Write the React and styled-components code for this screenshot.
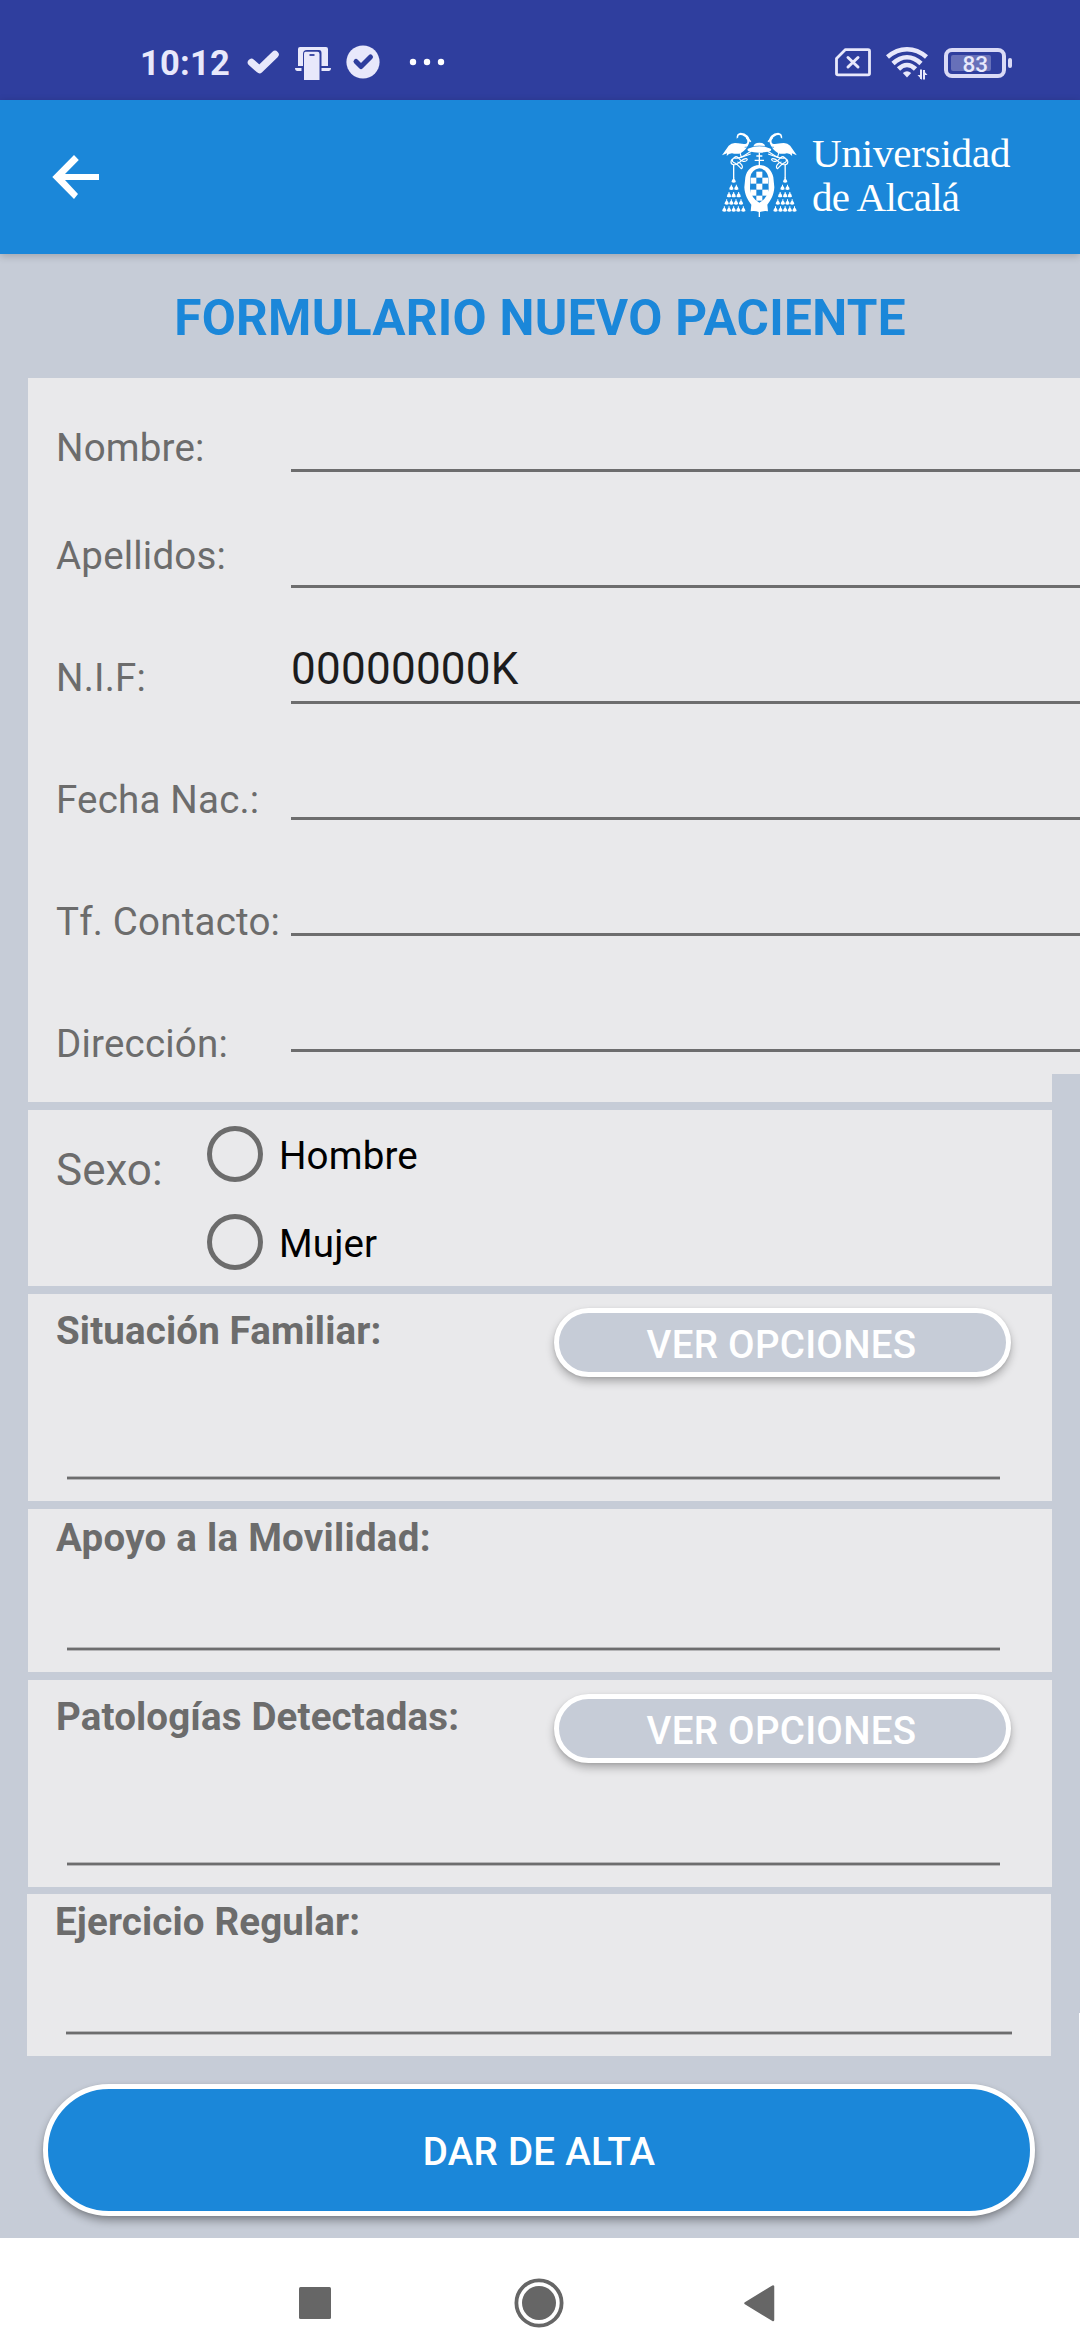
import React from "react";
import styled, { createGlobalStyle } from "styled-components";

const GlobalStyle = createGlobalStyle`
  *, *::before, *::after { box-sizing: border-box; }
  html, body { margin: 0; padding: 0; }
  body { font-family: Roboto, "Noto Sans", sans-serif; background: #ffffff; }
`;

const color = {
  primary: "#1b87d9",
  primaryDark: "#2f3e9e",
  surface: "#c6ccd7",
  card: "#e9e9eb",
  label: "#6c6c6c",
  line: "#6d6d6e",
  status: "#e8e8fb",
};

const Screen = styled.div`
  width: 1080px;
  height: 2340px;
  display: flex;
  flex-direction: column;
  overflow: hidden;
`;

const StatusBar = styled.header`
  height: 100px;
  flex: none;
  display: flex;
  align-items: flex-start;
  justify-content: space-between;
  padding: 45px 68px 0 140px;
  background: ${color.primaryDark};
  color: ${color.status};
`;

const StatusGroup = styled.div`
  height: 36px;
  display: flex;
  align-items: center;
`;

const Clock = styled.span`
  width: 90px;
  font-size: 34.5px;
  line-height: 36px;
  font-weight: 700;
  letter-spacing: 0.2px;
`;

const StatusIcon = styled.svg`
  display: block;
  flex: none;
  margin-left: ${(p) => p.$ml || 0}px;
`;

const Battery = styled.div`
  display: flex;
  align-items: center;
  gap: 2px;
  margin-left: 16px;
`;

const BatteryBody = styled.div`
  width: 62px;
  height: 30px;
  padding: 2.5px;
  border: 4.5px solid #dadaf6;
  border-radius: 8px;
`;

const BatteryLevel = styled.div`
  width: 40px;
  height: 16px;
  border-radius: 2px;
  background: #6770b9;
  font-size: 22.5px;
  line-height: 18px;
  font-weight: 500;
  text-indent: 12px;
  white-space: nowrap;
`;

const BatteryTip = styled.div`
  width: 4px;
  height: 10px;
  border-radius: 2px;
  background: #dadaf6;
`;

const AppBar = styled.div`
  height: 154px;
  flex: none;
  display: flex;
  justify-content: space-between;
  padding: 26px 66px 0 52px;
  background: ${color.primary};
  box-shadow: 0 2px 8px rgba(0, 0, 0, 0.2);
  z-index: 1;
`;

const BackButton = styled.button`
  width: 48px;
  height: 48px;
  margin-top: 27px;
  padding: 0;
  border: 0;
  background: none;
`;

const Brand = styled.div`
  display: flex;
  color: #fff;
`;

const BrandName = styled.div`
  width: 202px;
  margin-left: 6px;
  padding-top: 5px;
  font-family: "Liberation Serif", serif;
  font-size: 41px;
  line-height: 44px;
`;

const BrandLine = styled.div`
  letter-spacing: ${(p) => p.$spacing}px;
  white-space: nowrap;
`;

const Page = styled.main`
  position: relative;
  height: 1984px;
  flex: none;
  display: flex;
  flex-direction: column;
  padding: 0 28px;
  background: ${color.surface};
  overflow: hidden;
`;

const Title = styled.h1`
  height: 124px;
  flex: none;
  margin: 0;
  font-size: 49.5px;
  line-height: 128px;
  font-weight: 700;
  letter-spacing: 0.3px;
  text-align: center;
  color: ${color.primary};
`;

const Card = styled.section`
  height: ${(p) => p.$height}px;
  flex: none;
  margin: 0 0 8px;
  background: ${color.card};
`;

const PersonalData = styled.div`
  width: 1060px;
  height: 696px;
  display: flex;
  padding-left: 28px;
  background: ${color.card};
`;

const LabelColumn = styled.div`
  width: 235px;
  flex: none;
  display: flex;
  flex-direction: column;
  padding-top: 44px;
`;

const FieldLabel = styled.label`
  height: ${(p) => p.$height}px;
  flex: none;
  font-size: 38.5px;
  line-height: 52px;
  letter-spacing: 0.2px;
  color: ${color.label};
  white-space: nowrap;
`;

const InputColumn = styled.div`
  flex: 1;
  display: flex;
  flex-direction: column;
`;

const TextInput = styled.input`
  display: block;
  width: 100%;
  height: ${(p) => p.$height}px;
  padding: ${(p) => p.$height - 61}px 0 6px;
  border: 0;
  border-bottom: 3px solid ${color.line};
  border-radius: 0;
  outline: 0;
  background: none;
  font-family: inherit;
  font-size: 44px;
  line-height: 52px;
  letter-spacing: 0.25px;
  color: #1c1c1d;
`;

const GenderCard = styled(Card)`
  display: flex;
  padding-left: 28px;
`;

const GenderLabel = styled.span`
  width: 151px;
  padding-top: 30px;
  font-size: 44px;
  line-height: 60px;
  color: ${color.label};
`;

const RadioGroup = styled.div`
  display: flex;
  flex-direction: column;
`;

const RadioRow = styled.label`
  height: 88px;
  display: flex;
  align-items: center;
  gap: 16px;
`;

const RadioCircle = styled.span`
  width: 56px;
  height: 56px;
  border: 5.5px solid ${color.label};
  border-radius: 50%;
`;

const RadioText = styled.span`
  padding-top: 4px;
  font-size: 38.5px;
  line-height: 48px;
  letter-spacing: 0.15px;
  color: #000;
`;

const DetailCard = styled(Card)`
  display: flex;
  flex-direction: column;
  justify-content: space-between;
  padding: ${(p) => p.$top}px 41px 21px 28px;
`;

const LastCard = styled(DetailCard)`
  margin: -1px 1px 28px -1px;
`;

const CardHead = styled.div`
  display: flex;
  justify-content: space-between;
  align-items: flex-start;
`;

const CardTitle = styled.h2`
  margin: 0;
  font-size: 38.5px;
  line-height: 48px;
  font-weight: 700;
  letter-spacing: ${(p) => p.$spacing || 0.14}px;
  color: ${color.label};
`;

const Underline = styled.div`
  width: ${(p) => p.$width}px;
  height: 4px;
  margin-left: 11px;
  border-top: 1px solid #b5b5b7;
  border-bottom: 1px solid #b5b5b7;
  background: ${color.line};
`;

const PillButton = styled.button`
  display: block;
  flex: none;
  padding: 0;
  border: 5px solid #fff;
  font-family: inherit;
  font-size: 38.5px;
  font-weight: 500;
  letter-spacing: 0.28px;
  color: #fff;
`;

const OptionsButton = styled(PillButton)`
  width: 457px;
  height: 69px;
  margin-top: 1px;
  padding-top: 5px;
  padding-right: 2px;
  border-radius: 35px;
  line-height: 54px;
  background: ${color.surface};
  box-shadow: 0 5px 9px rgba(0, 0, 0, 0.26), 0 1px 3px rgba(0, 0, 0, 0.1);
`;

const SubmitButton = styled(PillButton)`
  width: 992px;
  height: 132px;
  margin-left: 15px;
  padding-top: 4px;
  border-radius: 66px;
  line-height: 118px;
  background: ${color.primary};
  box-shadow: 0 5px 9px rgba(0, 0, 0, 0.32), 0 1px 3px rgba(0, 0, 0, 0.1);
`;

const ScrollThumb = styled.div`
  position: absolute;
  right: 0;
  bottom: 0;
  width: 1px;
  height: 225px;
  background: #fff;
`;

const NavBar = styled.nav`
  height: 102px;
  flex: none;
  display: flex;
  align-items: flex-start;
  padding: 38px 0 0 289px;
  gap: 173px;
  background: #fff;
`;

const NavIcon = styled.svg`
  display: block;
  flex: none;
`;

/* One side of the coat of arms: crane, knotted cord and tassels */
function CrestSide() {
  return (
    <g>
      <path
        d="M18 88 L38 59 Q48 48 66 52 L84 54 Q94 56 94 46 Q94 37 84 31 Q76 25 69 28 Q66 29 67 34 L62 38 Q60 22 74 20 Q86 20 95 29 Q104 39 99 52 Q92 71 76 80 Q64 86 48 82 Q38 82 32 90 L33 82 Z"
        fill="currentColor"
      />
      <path d="M92 30 L106 46 L103 49 L90 38 Z" fill="currentColor" />
      <g fill="none" stroke="currentColor" strokeWidth="3.5">
        <path d="M72 80 L76 94 L104 84" />
        <path d="M106 76 C88 84 78 100 58 96 C42 98 42 114 52 116 C68 120 74 98 90 98 C98 98 92 108 82 106 C68 104 68 88 58 92 C48 98 46 106 54 110 C66 114 70 124 76 128 C84 124 76 110 64 108" />
        <path d="M53 116 V158" strokeWidth="4" />
      </g>
      <g fill="currentColor">
        {[
          [163, [53]],
          [185, [46, 61]],
          [207, [39, 53, 68]],
          [229, [32, 46, 60, 75]],
          [250, [25, 39, 53, 67, 82]],
        ].map(([y, xs]) =>
          xs.map((x) => (
            <path
              key={`${x}-${y}`}
              d={`M${x - 1.5} ${y - 9} h3 v4 q4 3 5 10 q-6 4 -13 0 q1 -7 5 -10 Z`}
            />
          ))
        )}
      </g>
    </g>
  );
}

function Crest() {
  return (
    <svg width="90" height="96" viewBox="0 0 270 288" aria-hidden="true">
      <CrestSide />
      <g transform="translate(260.5 0) scale(-1 1)">
        <CrestSide />
      </g>
      <g fill="currentColor">
        <path d="M112 62 Q114 50 130 50 Q146 50 148 62 L164 68 Q168 72 162 76 Q130 84 98 76 Q92 72 96 68 Z" />
        <path d="M128 80 h4 v40 h-4 Z M121 88 h18 v4 h-18 Z M116 101 h28 v4 h-28 Z" />
        <path d="M130 117 C152 117 168 132 172 154 L175 184 C174 206 164 224 154 236 L156 256 Q142 254 132 258 V273 H128 V258 Q118 254 104 256 L106 236 C96 224 86 206 85 184 L88 154 C92 132 108 117 130 117 Z" />
      </g>
      <path
        d="M130 127 Q152 130 157 153 L158 188 Q154 217 130 230 Q106 217 102 188 L103 153 Q108 130 130 127 Z"
        fill={color.primary}
      />
      <g fill="currentColor">
        <rect x="121" y="137" width="18" height="18" />
        <rect x="104" y="155" width="17" height="18" />
        <rect x="139" y="155" width="17" height="18" />
        <rect x="121" y="173" width="18" height="18" />
        <rect x="104" y="191" width="17" height="18" />
        <rect x="139" y="191" width="17" height="18" />
        <rect x="121" y="209" width="18" height="15" />
      </g>
      <path d="M86 64 Q130 56 174 64" fill="none" stroke={color.primary} strokeWidth="2" />
    </svg>
  );
}

const fields = [
  { id: "nombre", label: "Nombre:", value: "", labelHeight: 108, inputHeight: 94 },
  { id: "apellidos", label: "Apellidos:", value: "", labelHeight: 122, inputHeight: 116 },
  { id: "nif", label: "N.I.F:", value: "00000000K", labelHeight: 122, inputHeight: 116 },
  { id: "fecha", label: "Fecha Nac.:", value: "", labelHeight: 122, inputHeight: 116 },
  { id: "telefono", label: "Tf. Contacto:", value: "", labelHeight: 122, inputHeight: 116 },
  { id: "direccion", label: "Dirección:", value: "", labelHeight: 52, inputHeight: 116 },
];

function StatusIcons() {
  return (
    <StatusBar>
      <StatusGroup>
        <Clock>10:12</Clock>
        <StatusIcon $ml={16} width="34" height="36" viewBox="0 0 34 36">
          <path
            d="M5.5 17.5 L13.5 24.5 L29 9.5"
            fill="none"
            stroke="currentColor"
            strokeWidth="7.5"
            strokeLinecap="round"
            strokeLinejoin="round"
          />
        </StatusIcon>
        <StatusIcon $ml={15} width="36" height="36" viewBox="0 0 36 36">
          <g fill="currentColor">
            <path d="M5 2 H31 Q33 2 33 4 V21 H26.5 V8 Q26.5 5 24 5 H12 Q8 5 8 9 V21 H3 V4 Q3 2 5 2 Z" />
            <path d="M0 23 H6.5 V26 H2.5 Q0 26 0 23 Z M26.5 23 H36 Q36 26 33.5 26 H26.5 Z" />
            <path d="M10.5 6.8 H22.5 Q24.5 6.8 24.5 9 V35 H9 V9 Q9 6.8 10.5 6.8 Z" />
          </g>
          <path d="M14.5 10 H19.5" stroke={color.primaryDark} strokeWidth="1.8" />
        </StatusIcon>
        <StatusIcon $ml={15} width="34" height="36" viewBox="0 0 34 36">
          <circle cx="17" cy="17" r="16.6" fill="currentColor" />
          <path
            d="M10 16.5 L15 21.5 L24.5 12"
            fill="none"
            stroke={color.primaryDark}
            strokeWidth="5"
            strokeLinecap="round"
            strokeLinejoin="round"
          />
        </StatusIcon>
        <StatusIcon $ml={28} width="38" height="36" viewBox="0 0 38 36" fill="#fff">
          <circle cx="5" cy="17" r="3.2" />
          <circle cx="19" cy="17" r="3.2" />
          <circle cx="33" cy="17" r="3.2" />
        </StatusIcon>
      </StatusGroup>
      <StatusGroup>
        <StatusIcon width="36" height="36" viewBox="0 0 36 36">
          <g fill="none" stroke="currentColor" strokeLinecap="round" strokeLinejoin="round">
            <path
              d="M10.5 4.6 H33 Q34.5 4.6 34.5 6 V28.5 Q34.5 29.8 33 29.8 H3 Q1.5 29.8 1.5 28.5 V13.5 Z"
              strokeWidth="2.8"
            />
            <path d="M13 12.5 L23 22 M23 12.5 L13 22" strokeWidth="3" />
          </g>
        </StatusIcon>
        <StatusIcon $ml={15} width="42" height="36" viewBox="0 0 42 36">
          <g fill="none" stroke="currentColor" strokeWidth="4.6">
            <path d="M1.5 12 Q10.5 4.2 21 4.2 Q31.5 4.2 40.5 12" />
            <path d="M7 18.5 Q13.5 12.2 21 12.2 Q28.5 12.2 35 18.5" />
            <path d="M12.5 24 Q16.5 20 21 20 Q25.5 20 29.5 24" />
          </g>
          <path d="M16.8 28 Q21 24.5 25.2 28 L21 32.5 Z" fill="currentColor" />
          <path d="M35 24.5 V34 M38 34.5 V25" stroke="currentColor" strokeWidth="2" />
          <path d="M36 35 L31.5 30 H36 Z M37 25 L41.5 30 H37 Z" fill="currentColor" />
        </StatusIcon>
        <Battery>
          <BatteryBody>
            <BatteryLevel>83</BatteryLevel>
          </BatteryBody>
          <BatteryTip />
        </Battery>
      </StatusGroup>
    </StatusBar>
  );
}

export default function App() {
  return (
    <Screen>
      <GlobalStyle />
      <StatusIcons />

      <AppBar>
        <BackButton aria-label="Atrás">
          <svg width="48" height="48" viewBox="0 0 48 48" fill="#fff">
            <path d="M0.3 24 L22 2 L26.8 7 L13 21 H47 V27 H13 L26 41 L22 46 Z" />
          </svg>
        </BackButton>
        <Brand>
          <Crest />
          <BrandName>
            <BrandLine $spacing={-0.2}>Universidad</BrandLine>
            <BrandLine $spacing={-0.7}>de Alcalá</BrandLine>
          </BrandName>
        </Brand>
      </AppBar>

      <Page>
        <Title>FORMULARIO NUEVO PACIENTE</Title>

        <Card $height={724}>
          <PersonalData>
            <LabelColumn>
              {fields.map((f) => (
                <FieldLabel key={f.id} htmlFor={f.id} $height={f.labelHeight}>
                  {f.label}
                </FieldLabel>
              ))}
            </LabelColumn>
            <InputColumn>
              {fields.map((f) => (
                <TextInput key={f.id} id={f.id} defaultValue={f.value} $height={f.inputHeight} />
              ))}
            </InputColumn>
          </PersonalData>
        </Card>

        <GenderCard $height={176}>
          <GenderLabel>Sexo:</GenderLabel>
          <RadioGroup>
            {["Hombre", "Mujer"].map((option) => (
              <RadioRow key={option}>
                <RadioCircle />
                <RadioText>{option}</RadioText>
              </RadioRow>
            ))}
          </RadioGroup>
        </GenderCard>

        <DetailCard $height={207} $top={13}>
          <CardHead>
            <CardTitle>Situación Familiar:</CardTitle>
            <OptionsButton>VER OPCIONES</OptionsButton>
          </CardHead>
          <Underline $width={933} />
        </DetailCard>

        <DetailCard $height={163} $top={5}>
          <CardTitle $spacing={0.26}>Apoyo a la Movilidad:</CardTitle>
          <Underline $width={933} />
        </DetailCard>

        <DetailCard $height={207} $top={13}>
          <CardHead>
            <CardTitle>Patologías Detectadas:</CardTitle>
            <OptionsButton>VER OPCIONES</OptionsButton>
          </CardHead>
          <Underline $width={933} />
        </DetailCard>

        <LastCard $height={162} $top={4}>
          <CardTitle>Ejercicio Regular:</CardTitle>
          <Underline $width={946} />
        </LastCard>

        <SubmitButton>DAR DE ALTA</SubmitButton>
        <ScrollThumb />
      </Page>

      <NavBar>
        <NavIcon width="52" height="52" viewBox="0 0 52 52">
          <rect x="10" y="11" width="32" height="32" rx="1.5" fill="#666" />
        </NavIcon>
        <NavIcon width="52" height="52" viewBox="0 0 52 52">
          <circle cx="25" cy="27" r="22.6" fill="none" stroke="#666" strokeWidth="3.8" />
          <circle cx="25" cy="27" r="17" fill="#666" />
        </NavIcon>
        <NavIcon width="52" height="52" viewBox="0 0 52 52">
          <path
            d="M6.5 27.2 L34 10.5 V44 Z"
            fill="#666"
            stroke="#666"
            strokeWidth="2.5"
            strokeLinejoin="round"
          />
        </NavIcon>
      </NavBar>
    </Screen>
  );
}
